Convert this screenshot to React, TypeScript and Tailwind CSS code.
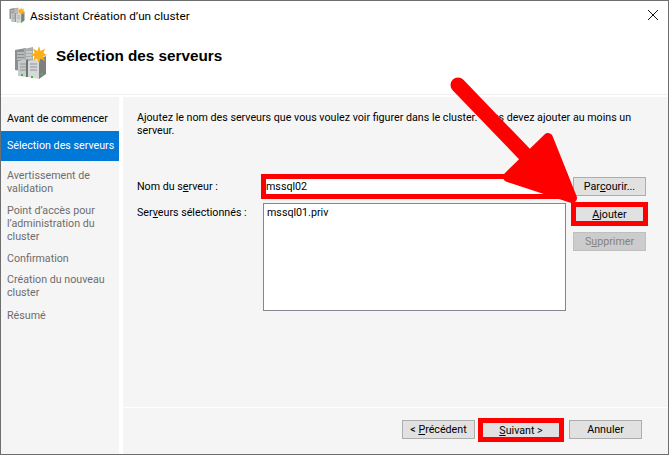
import React from "react";

const font = { fontFamily: 'Roboto, "Noto Sans", sans-serif' };

function Towers({ s }: { s: number }) {
  return (
    <svg width={s} height={s} viewBox="0 0 33 33" className="shrink-0 mb-[2px]">
      <path d="M1 4 L12 2 L12 26 L1 24 Z" fill="#8b8f8f" />
      <path d="M10 3 L19 1 L19 24 L10 26 Z" fill="#a9adad" />
      <path d="M3 7h7M3 10h7M3 13h7M12 6h6M12 9h6M12 12h6" stroke="#e3e5e5" strokeWidth="1" />
      <path d="M4 15 L14 13 L14 31 L4 30 Z" fill="#c9cccc" />
      <path d="M12 14 L14 13 L14 31 L12 31 Z" fill="#6e7272" />
      <path d="M14 15 L25 13 L25 33 L14 31 Z" fill="#d7d9d9" />
      <path d="M25 13 L32 10 L32 28 L25 33 Z" fill="#7c8080" />
      <path d="M6 18h6M6 21h6M6 24h6M16 18h7M16 21h7M16 24h7" stroke="#8f9393" strokeWidth="1" />
      <rect x="7" y="28" width="2" height="2" fill="#3fbf3f" />
      <rect x="17" y="30" width="2" height="2" fill="#3fbf3f" />
      <rect x="27" y="27" width="2" height="2" fill="#3fbf3f" />
      <path
        d="M25 0 L26.6 5 L31 2.5 L29.5 7 L33 9 L29 10.5 L31 15 L26.5 12.5 L25 17 L23 12.5 L19 15 L20.5 10.5 L16.5 9 L20.5 7 L19 2.5 L23.5 5 Z"
        fill="#fbb116"
      />
    </svg>
  );
}

function Btn({
  children,
  className = "",
  disabled = false,
}: {
  children: React.ReactNode;
  className?: string;
  disabled?: boolean;
}) {
  return (
    <div
      className={
        "flex items-center justify-center border whitespace-pre pt-[2px] " +
        (disabled
          ? "bg-[#cccccc] border-[#bfbfbf] text-[#838383] "
          : "bg-[#e1e1e1] border-[#adadad] text-black ") +
        className
      }
    >
      {children}
    </div>
  );
}

function Nav({ children, mt }: { children: React.ReactNode; mt: string }) {
  return <div className={"pl-[6px] leading-[13px] text-[#6d6d6d] whitespace-nowrap " + mt}>{children}</div>;
}

export default function App() {
  return (
    <div
      style={font}
      className="relative w-[669px] h-[455px] overflow-hidden bg-white flex flex-col border border-[#6e6e6e] text-[10.7px] text-black"
    >
      <div className="h-[30px] shrink-0 flex items-center pl-[8px] gap-[5px]">
        <Towers s={16} />
        <span className="text-[11.75px] pt-[2px]">Assistant Création d’un cluster</span>
        <svg width="10" height="10" viewBox="0 0 10 10" className="ml-auto mr-[10px] mb-[2px]">
          <path d="M0 0L10 10M10 0L0 10" stroke="#111" strokeWidth="1" />
        </svg>
      </div>
      <div className="h-[64px] shrink-0 flex items-start pl-[13px] pt-[15px] gap-[9px] border-b border-[#f0f0f0]">
        <Towers s={33} />
        <span className="font-bold text-[15.25px] leading-[22px] mt-[-1px] font-['Liberation_Sans']">
          Sélection des serveurs
        </span>
      </div>
      <div className="flex-1 flex pt-[2px] min-h-0">
        <div className="w-[118px] shrink-0 bg-[#f5f5f5] pt-[15px]">
          <div className="pl-[6px] leading-[13px]">Avant de commencer</div>
          <div className="h-[30px] mt-[6px] pl-[6px] flex items-center bg-[#0078d7] text-white whitespace-nowrap">Sélection des serveurs</div>
          <Nav mt="mt-[8px]">
            Avertissement de
            <br />
            validation
          </Nav>
          <Nav mt="mt-[9px]">
            Point d’accès pour
            <br />
            l’administration du
            <br />
            cluster
          </Nav>
          <Nav mt="mt-[9px]">Confirmation</Nav>
          <Nav mt="mt-[8px]">
            Création du nouveau
            <br />
            cluster
          </Nav>
          <Nav mt="mt-[10px]">Résumé</Nav>
        </div>
        <div className="ml-[4px] flex-1 bg-[#f5f5f5] flex flex-col">
          <div className="flex-1 pl-[14px] pt-[14px]">
            <p className="w-[510px] leading-[13px]">
              Ajoutez le nom des serveurs que vous voulez voir figurer dans le cluster. Vous devez ajouter au moins un serveur.
            </p>
            <div className="flex mt-[40px] h-[19px] items-center">
              <span className="w-[126px] whitespace-nowrap pt-[2px]">
                Nom du s<u>e</u>rveur :
              </span>
              <div className="w-[303px] h-[21px] bg-white flex items-center pl-[3px] pt-[2px] outline-[5px] outline-[#ff0000] outline-offset-[-3px]">
                mssql02
              </div>
              <Btn className="ml-[7px] w-[73px] h-[19px]">
                Par<u>c</u>ourir...
              </Btn>
            </div>
            <div className="flex mt-[7px]">
              <span className="w-[126px] pt-[2px] whitespace-nowrap">
                Ser<u>v</u>eurs sélectionnés :
              </span>
              <div className="w-[303px] h-[108px] bg-white border border-[#828790] pl-[3px] pt-[1px]">mssql01.priv</div>
              <div className="ml-[7px] flex flex-col">
                <Btn className="w-[73px] h-[20px] mt-[1px] outline-[5px] outline-[#ff0000] outline-offset-[-3px]">
                  <span>
                    <u>A</u>jouter
                  </span>
                </Btn>
                <Btn disabled className="w-[73px] h-[19px] mt-[8px]">
                  S<u>u</u>pprimer
                </Btn>
              </div>
            </div>
          </div>
          <div className="h-[47px] shrink-0 border-t border-white flex pt-[12px] pl-[279px]">
            <Btn className="w-[73px] h-[19px]">
              &lt; <u>P</u>récédent
            </Btn>
            <Btn className="ml-[5px] w-[82px] h-[20px] outline-[5px] outline-[#ff0000] outline-offset-[-3px]">
              <u>S</u>uivant &gt;
            </Btn>
            <Btn className="ml-[7px] w-[73px] h-[19px]">Annuler</Btn>
          </div>
        </div>
      </div>
      <svg width="669" height="455" viewBox="0 0 669 455" className="absolute -left-px -top-px pointer-events-none">
        <path d="M458 85 L536 166" stroke="#ff0000" strokeWidth="15" strokeLinecap="round" fill="none" />
        <path
          d="M548 138 L572 198 L508 177 Z"
          fill="#ff0000"
          stroke="#ff0000"
          strokeWidth="10"
          strokeLinejoin="round"
        />
      </svg>
    </div>
  );
}
